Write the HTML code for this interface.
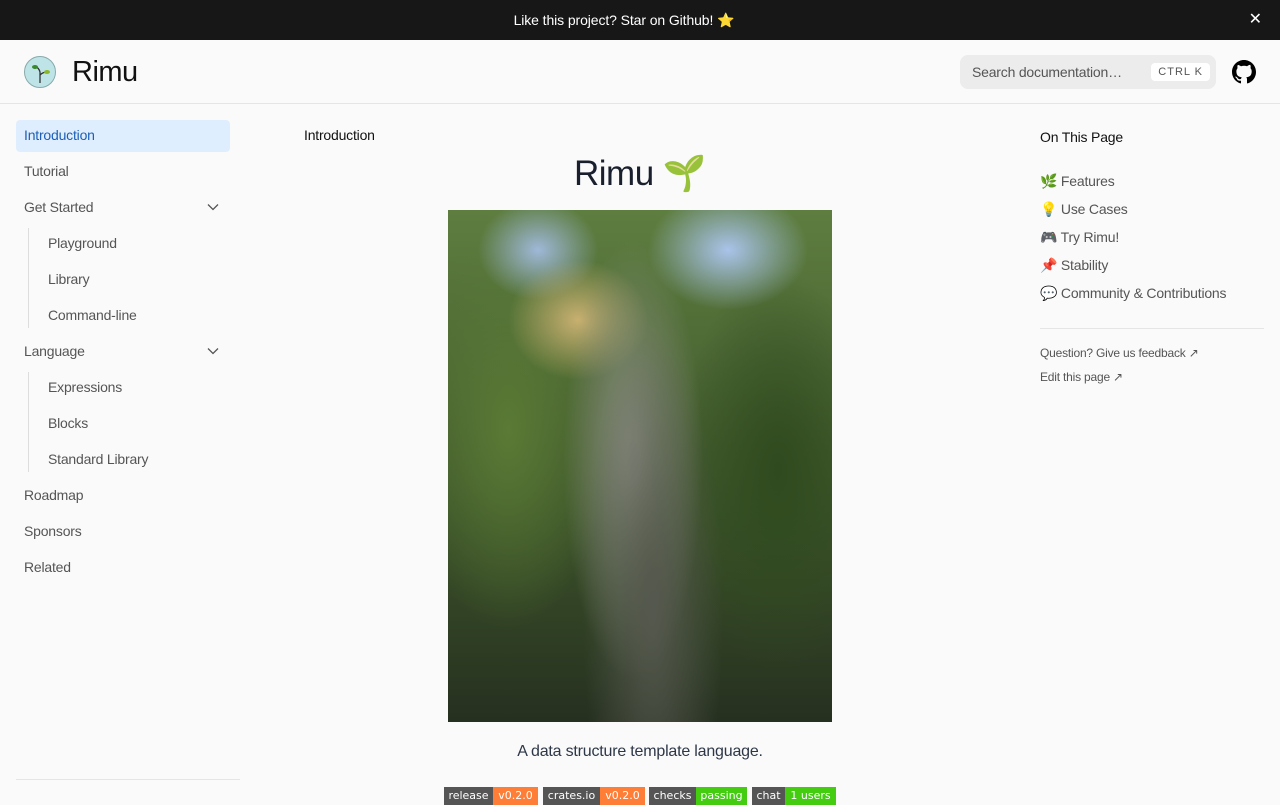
<!DOCTYPE html>
<html><head><meta charset="utf-8"><style>
*{box-sizing:border-box;margin:0;padding:0}
body{width:1280px;height:800px;overflow:hidden;background:#fafafa;font-family:"Liberation Sans",sans-serif;position:relative}
.banner{position:absolute;top:0;left:0;width:1280px;height:40px;background:#171717;color:#fff;font-size:14px;line-height:40px}
.banner .m{position:absolute;left:512px;top:0;width:224px;text-align:center;letter-spacing:-0.1px}
.banner .x{position:absolute;right:18px;top:0;font-size:16px}
.hdr{position:absolute;top:40px;left:0;width:1280px;height:64px;border-bottom:1px solid #e5e5e5}
.logo{position:absolute;left:24px;top:16px;width:32px;height:32px;border-radius:50%;background:#bfe4e8;border:1px solid #8aa}
.brand{position:absolute;left:72px;top:16px;font-size:29px;color:#111;letter-spacing:-0.5px}
.search{position:absolute;left:960px;top:15px;width:256px;height:34px;background:#ececec;border-radius:8px;color:#555;font-size:14px;padding:9px 12px;letter-spacing:-0.2px}
.kbd{position:absolute;right:6px;top:8px;background:#fff;border-radius:4px;font-size:11px;padding:3px 7px;color:#555;letter-spacing:1px}
.gh{position:absolute;left:1232px;top:20px}
.side{position:absolute;left:16px;top:120px;width:214px;font-size:14px;color:#555;letter-spacing:-0.2px}
.side div{height:32px;line-height:31px;padding-left:8px;margin-bottom:4px;position:relative}
.side .act{background:#dfeefe;color:#1d5fb8;border-radius:4px}
.side .sub{padding-left:32px}
.side svg{position:absolute;right:11px;top:11px}
.vline{position:absolute;left:28px;width:1px;background:#ddd}
.crumb{position:absolute;left:304px;top:127px;font-size:14px;color:#111;letter-spacing:-0.2px}
h1{position:absolute;left:0;width:1280px;text-align:center;top:153px;font-size:35px;font-weight:400;color:#1a1f2e;letter-spacing:-0.5px}
.tree{position:absolute;left:448px;top:210px;width:384px;height:512px;
background:
radial-gradient(ellipse 70px 280px at 205px 400px,#55584e,transparent),
radial-gradient(ellipse 70px 220px at 185px 250px,#8a8e80 10%,transparent),
radial-gradient(ellipse 70px 60px at 130px 110px,#c8b070,transparent),
radial-gradient(ellipse 80px 60px at 280px 40px,#a9c3ea,transparent),
radial-gradient(ellipse 60px 50px at 90px 40px,#9fb8d8,transparent),
radial-gradient(ellipse 100px 200px at 60px 220px,#5a7a35,transparent),
radial-gradient(ellipse 100px 200px at 330px 260px,#2f4a1e,transparent),
linear-gradient(#5e7e40,#3b5229 60%,#263020)}
.cap{position:absolute;left:0;width:1280px;text-align:center;top:743px;font-size:16px;color:#2d3748;letter-spacing:-0.2px}
.badges{position:absolute;top:787px;left:0;font-family:"DejaVu Sans",sans-serif;font-size:11px;color:#fff}
.b{position:absolute;top:0;height:18px;line-height:18px;text-align:center;overflow:hidden;white-space:nowrap}
.l{background:#555}.o{background:#fe7d37}.g{background:#4c1}
.toc{position:absolute;left:1040px;top:129px;font-size:14px;color:#555;letter-spacing:-0.2px}
.toc .t{color:#111;margin-bottom:28px}
.toc .i{height:28px}
.toc hr{border:0;border-top:1px solid #e5e5e5;width:224px;margin:15px 0 17px}
.toc .s{font-size:12px;height:24px}
.foot{position:absolute;left:16px;top:779px;width:224px;border-top:1px solid #e5e5e5}
</style></head><body>
<div class="banner"><span class="m">Like this project? Star on Github! ⭐</span><span class="x">✕</span></div>
<div class="hdr">
<div class="logo"><svg width="32" height="32" viewBox="0 0 32 32"><path d="M15 26 V15 Q14 11 10 9 M15 18 Q18 15 22 15" stroke="#333" fill="none" stroke-width="1.3"/><ellipse cx="10" cy="10" rx="3" ry="2" fill="#3a8a2a"/><ellipse cx="22" cy="15" rx="3" ry="2" fill="#8ab82a"/></svg></div>
<div class="brand">Rimu</div>
<div class="search">Search documentation…<span class="kbd">CTRL K</span></div>
<svg class="gh" width="24" height="24" viewBox="0 0 16 16"><path fill="#000" d="M8 0C3.58 0 0 3.58 0 8c0 3.54 2.29 6.53 5.47 7.59.4.07.55-.17.55-.38 0-.19-.01-.82-.01-1.49-2.01.37-2.53-.49-2.69-.94-.09-.23-.48-.94-.82-1.13-.28-.15-.68-.52-.01-.53.63-.01 1.08.58 1.23.82.72 1.21 1.87.87 2.33.66.07-.52.28-.87.51-1.07-1.78-.2-3.64-.89-3.64-3.95 0-.87.31-1.59.82-2.15-.08-.2-.36-1.02.08-2.12 0 0 .67-.21 2.2.82.64-.18 1.32-.27 2-.27.68 0 1.36.09 2 .27 1.53-1.04 2.2-.82 2.2-.82.44 1.1.16 1.92.08 2.12.51.56.82 1.27.82 2.15 0 3.07-1.87 3.75-3.65 3.95.29.25.54.73.54 1.48 0 1.07-.01 1.93-.01 2.2 0 .21.15.46.55.38A8.013 8.013 0 0 0 16 8c0-4.42-3.58-8-8-8z"/></svg>
</div>
<div class="vline" style="top:228px;height:100px"></div>
<div class="vline" style="top:372px;height:100px"></div>
<div class="side">
<div class="act">Introduction</div><div>Tutorial</div><div>Get Started<svg width="12" height="8" viewBox="0 0 12 8"><path d="M1 1.5l5 5 5-5" stroke="#555" stroke-width="1.3" fill="none"/></svg></div>
<div class="sub">Playground</div><div class="sub">Library</div><div class="sub">Command-line</div>
<div>Language<svg width="12" height="8" viewBox="0 0 12 8"><path d="M1 1.5l5 5 5-5" stroke="#555" stroke-width="1.3" fill="none"/></svg></div><div class="sub">Expressions</div><div class="sub">Blocks</div><div class="sub">Standard Library</div>
<div>Roadmap</div><div>Sponsors</div><div>Related</div>
</div>
<div class="foot"></div>
<div class="crumb">Introduction</div>
<h1>Rimu 🌱</h1>
<div class="tree"></div>
<div class="cap">A data structure template language.</div>
<div class="badges">
<div class="b l" style="left:444px;width:49px">release</div><div class="b o" style="left:493px;width:45px">v0.2.0</div>
<div class="b l" style="left:543px;width:57px">crates.io</div><div class="b o" style="left:600px;width:45px">v0.2.0</div>
<div class="b l" style="left:649px;width:47px">checks</div><div class="b g" style="left:696px;width:51px">passing</div>
<div class="b l" style="left:752px;width:33px">chat</div><div class="b g" style="left:785px;width:51px">1 users</div>
</div>
<div class="toc">
<div class="t">On This Page</div>
<div class="i">🌿 Features</div><div class="i">💡 Use Cases</div><div class="i">🎮 Try Rimu!</div><div class="i">📌 Stability</div><div class="i">💬 Community &amp; Contributions</div>
<hr>
<div class="s">Question? Give us feedback ↗</div><div class="s">Edit this page ↗</div>
</div>
</body></html>
